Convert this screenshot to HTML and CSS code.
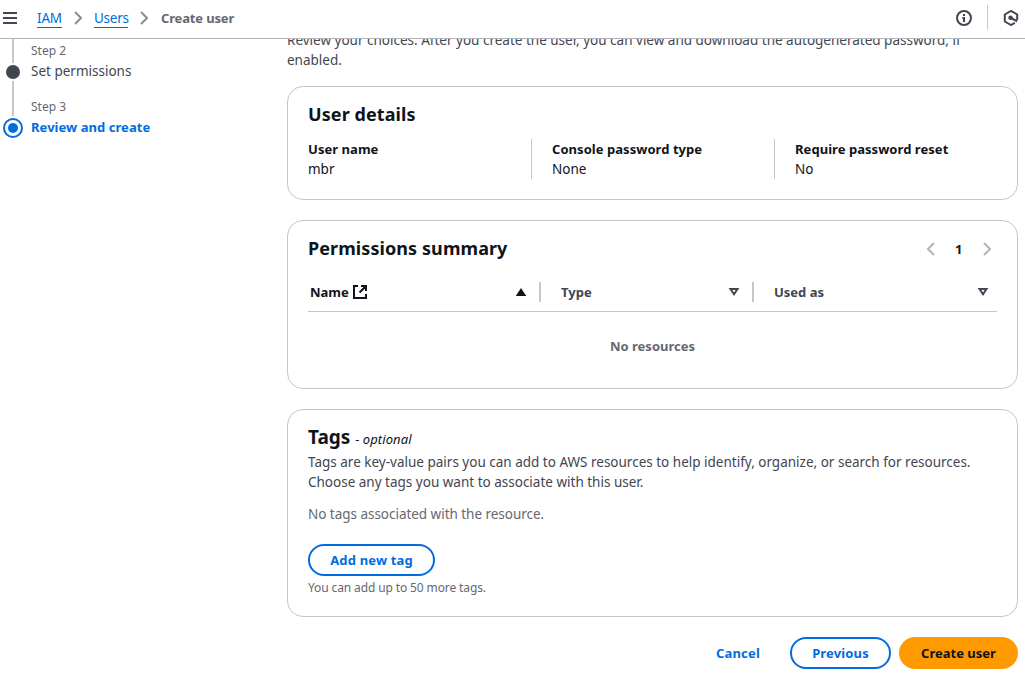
FILE: index.html
```html
<!DOCTYPE html>
<html lang="en">
<head>
<meta charset="utf-8">
<title>Create user</title>
<link rel="stylesheet" href="styles.css">
</head>
<body>
<header class="topbar">
  <svg class="menu" width="16" height="16" viewBox="0 0 16 16"><path d="M1 3h14M1 8h14M1 13h14"/></svg>
  <nav class="crumbs">
    <a class="iam">IAM</a>
    <svg class="chev" width="8" height="14" viewBox="0 0 8 14"><path d="M1 1l6 6-6 6"/></svg>
    <a class="users">Users</a>
    <svg class="chev" width="8" height="14" viewBox="0 0 8 14"><path d="M1 1l6 6-6 6"/></svg>
    <span class="current">Create user</span>
  </nav>
  <svg class="info" width="16" height="16" viewBox="0 0 16 16"><circle cx="8" cy="8" r="7"/><path d="M8 4v2M6.300 8H8v4"/></svg>
  <span class="bar"></span>
  <svg class="hex" width="16" height="16" viewBox="0 0 16 16"><path d="M14.2 10v-5.500L8 1 1.8 4.500v7L8 15l3.800-2.200M8 8l6.200 3.300"/><circle cx="7.500" cy="7.700" r="2.200"/></svg>
</header>
<div class="page">
  <aside class="steps">
    <span class="line first"></span>
    <div class="step-text"><small>Step 2</small><span class="set">Set permissions</span></div>
    <span class="dot"></span>
    <span class="line second"></span>
    <div class="step-text"><small>Step 3</small><b class="review">Review and create</b></div>
    <span class="dot active"></span>
  </aside>
  <main>
    <p class="intro">Review your choices. After you create the user, you can view and download the autogenerated password, if<br>enabled.</p>
    <section class="card details">
      <h2>User details</h2>
      <dl>
        <div><dt>User name</dt><dd>mbr</dd></div>
        <div><dt>Console password type</dt><dd>None</dd></div>
        <div><dt>Require password reset</dt><dd>No</dd></div>
      </dl>
    </section>
    <section class="card perms">
      <div class="head">
        <h2>Permissions summary</h2>
        <div class="pager">
          <svg width="8" height="14" viewBox="0 0 8 14"><path d="M7 1L1 7l6 6"/></svg>
          <b>1</b>
          <svg width="8" height="14" viewBox="0 0 8 14"><path d="M1 1l6 6-6 6"/></svg>
        </div>
      </div>
      <div class="thead">
        <div class="th name"><span>Name</span><svg class="ext" width="16" height="16" viewBox="0 0 16 16"><path d="M6 2H2v12h12v-4M9 2h5v5M14 2L7.500 8.500"/></svg><svg class="sort up" width="12" height="10" viewBox="0 0 12 10"><path d="M6 1l5.200 8H.8z"/></svg></div>
        <div class="th"><span>Type</span><svg class="sort" width="12" height="10" viewBox="0 0 12 10"><path d="M2.500 2h7L6 7.300z"/></svg></div>
        <div class="th"><span>Used as</span><svg class="sort" width="12" height="10" viewBox="0 0 12 10"><path d="M2.500 2h7L6 7.300z"/></svg></div>
      </div>
      <div class="empty">No resources</div>
    </section>
    <section class="card tags">
      <h2><span class="title">Tags</span> <i>- optional</i></h2>
      <p class="desc">Tags are key-value pairs you can add to AWS resources to help identify, organize, or search for resources.<br>Choose any tags you want to associate with this user.</p>
      <p class="none">No tags associated with the resource.</p>
      <button class="btn add">Add new tag</button>
      <p class="limit">You can add up to 50 more tags.</p>
    </section>
    <div class="actions">
      <button class="btn link">Cancel</button>
      <button class="btn prev">Previous</button>
      <button class="btn primary">Create user</button>
    </div>
  </main>
</div>
</body>
</html>
```
FILE: styles.css
```css
* { box-sizing: border-box; }
body {
  margin: 0;
  height: 674px;
  overflow: hidden;
  background: #fff;
  color: #0f141a;
  font: 13.5px/20px "Noto Sans", "Open Sans", sans-serif;
  white-space: nowrap;
}
h2, p, dl, dd { margin: 0; }
svg { display: block; flex: none; fill: none; stroke: #424650; stroke-width: 2; }
.topbar { display: flex; align-items: center; height: 39px; padding: 0 6px 3px 2px; border-bottom: 1px solid #b4b4bb; }
.crumbs { display: flex; align-items: center; flex: 1; margin-left: 19px; }
.crumbs a { color: #006ce0; border-bottom: 1px solid #006ce0; height: 19px; line-height: 18px; margin-top: 1px; }
.iam { width: 25px; letter-spacing: -0.2px; }
.users { width: 34px; letter-spacing: -0.25px; }
.crumbs .chev { margin: 0 12px; stroke: #8c8c94; }
.current { color: #656871; font-size: 13px; font-weight: 700; letter-spacing: -0.15px; margin-left: 1px; }
.bar { width: 1px; height: 25px; background: #c6c6cd; margin: 0 15px; }
.hex circle { fill: #424650; stroke: none; }
.page { display: flex; height: 635px; overflow: hidden; }
.steps { width: 287px; flex: none; display: grid; grid-template-columns: 26px 1fr; grid-template-rows: 24px 18px 36px 22px; align-content: start; }
.line { width: 2px; background: #c6c6cd; justify-self: center; grid-column: 1; }
.line.first { grid-row: 1; height: 24px; }
.line.second { grid-row: 3; height: 35px; }
.step-text { grid-column: 2; grid-row: 1 / 3; padding: 3px 0 0 5px; color: #424650; }
.second + .step-text { grid-row: 3 / 5; padding-top: 17px; }
.step-text small { display: block; font-size: 12px; line-height: 18px; color: #656871; }
.step-text span, .step-text b { display: block; width: max-content; margin-top: 1px; }
.step-text .review { color: #006ce0; font-size: 13px; font-weight: 700; letter-spacing: 0.05px; }
.dot { grid-column: 1; grid-row: 2; width: 14px; height: 14px; border-radius: 50%; background: #424650; place-self: center; }
.dot.active { grid-row: 4; width: 20px; height: 20px; border: 2px solid #006ce0; background: #006ce0; background-clip: content-box; padding: 3px; }
main { width: 731px; }
.intro { color: #424650; margin-top: -9px; }
.card { border: 1px solid #c6c6cd; border-radius: 16px; padding: 15px 20px 0; margin-bottom: 20px; }
.details { height: 114px; margin-top: 16px; }
h2 { font-size: 18px; line-height: 24px; font-weight: 700; letter-spacing: 0.08px; }
dl { display: grid; grid-template-columns: 223px 243px 223px; margin-top: 13px; }
dl div + div { border-left: 1px solid #c6c6cd; padding-left: 20px; }
dt { font-size: 13px; font-weight: 700; letter-spacing: 0.05px; }
dt, dd { width: max-content; }
.perms { height: 169px; }
.head { display: flex; justify-content: space-between; align-items: center; height: 24px; }
.pager { display: flex; align-items: center; gap: 20px; margin: 1px 6px 0 0; }
.pager svg { stroke: #b4b4bb; }
.pager b { font-size: 13px; width: 8px; }
.thead { display: grid; grid-template-columns: 232px 213px 244px; align-items: center; height: 52px; padding-top: 13px; border-bottom: 1px solid #c6c6cd; }
.th { display: flex; align-items: center; height: 20px; padding-left: 20px; border-left: 2px solid #c6c6cd; color: #424650; font-size: 13px; font-weight: 700; margin-left: -1px; }
.th.name { border: 0; padding-left: 3px; color: #0f141a; }
.sort { margin-left: auto; margin-right: 8px; }
.name .sort { margin-right: 13px; }
.th:nth-child(2) .sort { margin-right: 13px; }
.up { fill: #0f141a; stroke: none; }
.ext { stroke: #0f141a; margin-left: 3px; }
.empty { display: flex; justify-content: center; padding-top: 24px; color: #656871; font-size: 13px; font-weight: 700; }
.tags { height: 208px; }
.title { font-size: 19px; letter-spacing: 0; }
.tags h2 i { font-size: 13px; font-weight: 400; letter-spacing: 0.1px; }
.desc { color: #424650; margin-top: 1px; }
.none { color: #656871; margin-top: 12px; letter-spacing: -0.03px; }
.btn { height: 32px; border: 2px solid #006ce0; border-radius: 16px; padding: 0; background: #fff; color: #006ce0; font: 700 13px/20px "Noto Sans", "Open Sans", sans-serif; letter-spacing: 0.15px; }
.add { display: block; width: 127px; margin-top: 20px; }
.limit { font-size: 12px; line-height: 16px; color: #656871; margin-top: 4px; letter-spacing: -0.12px; }
.actions { display: flex; justify-content: flex-end; }
.link { border-color: transparent; width: 88px; margin-right: 8px; }
.prev { width: 101px; margin-right: 8px; }
.primary { width: 119px; background: #ff9900; border-color: #ff9900; color: #0f141a; letter-spacing: 0; }
```
